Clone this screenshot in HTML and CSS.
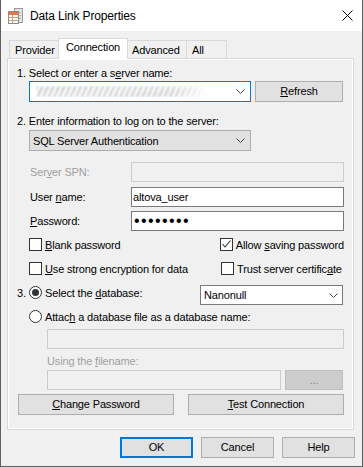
FILE: index.html
```html
<!DOCTYPE html>
<html>
<head>
<meta charset="utf-8">
<link rel="stylesheet" href="styles.css">
</head>
<body>
<div class="window">
  <div class="titlebar">
    <svg class="app-icon" width="16" height="16" viewBox="0 0 16 16">
      <rect x="6.5" y="0.5" width="8" height="14" fill="#e4e4e4" stroke="#9a9a9a"/>
      <line x1="8" y1="4.5" x2="13" y2="4.5" stroke="#b0b0b0"/>
      <line x1="8" y1="7.5" x2="13" y2="7.5" stroke="#b0b0b0"/>
      <line x1="8" y1="10.5" x2="13" y2="10.5" stroke="#b0b0b0"/>
      <rect x="0.5" y="3.5" width="10" height="12" fill="#fafafa" stroke="#8c8c8c"/>
      <rect x="1" y="4" width="9" height="3" fill="#e9773d"/>
      <line x1="1" y1="9.5" x2="10" y2="9.5" stroke="#c9a07c"/>
      <line x1="1" y1="12.5" x2="10" y2="12.5" stroke="#c9a07c"/>
      <line x1="4.5" y1="7" x2="4.5" y2="15" stroke="#c9a07c"/>
    </svg>
    <span class="title">Data Link Properties</span>
    <svg class="close" width="11" height="11" viewBox="0 0 11 11">
      <line x1="0.5" y1="0.5" x2="10.5" y2="10.5" stroke="#000"/>
      <line x1="10.5" y1="0.5" x2="0.5" y2="10.5" stroke="#000"/>
    </svg>
  </div>

  <div class="main">
    <div class="tabs">
      <div class="tab tab-provider">Provider</div>
      <div class="tab tab-connection active">Connection</div>
      <div class="tab tab-advanced">Advanced</div>
      <div class="tab tab-all">All</div>
    </div>
    <div class="panel">
      <div class="text-row">1. Select or enter a s<u>e</u>rver name:</div>
      <div class="server-row">
        <div class="combo focus">
          <div class="blurred"></div>
          <svg class="chevron" width="9" height="5" viewBox="0 0 9 5"><polyline points="0.5,0.5 4.5,4.5 8.5,0.5" fill="none" stroke="#444"/></svg>
        </div>
        <div class="btn refresh"><u>R</u>efresh</div>
      </div>
      <div class="text-row r2">2. Enter information to log on to the server:</div>
      <div class="combo list auth">
        <span class="combo-text">SQL Server Authentication</span>
        <svg class="chevron" width="9" height="5" viewBox="0 0 9 5"><polyline points="0.5,0.5 4.5,4.5 8.5,0.5" fill="none" stroke="#444"/></svg>
      </div>
      <div class="field-row spn">
        <span class="field-label disabled">Ser<u>v</u>er SPN:</span>
        <div class="input disabled-input"></div>
      </div>
      <div class="field-row user">
        <span class="field-label">User <u>n</u>ame:</span>
        <div class="input">altova_user</div>
      </div>
      <div class="field-row pass">
        <span class="field-label"><u>P</u>assword:</span>
        <div class="input password">••••••••</div>
      </div>
      <div class="check-row c1">
        <div class="check-item first"><span class="box"></span><span><u>B</u>lank password</span></div>
        <div class="check-item"><span class="box"><svg width="11" height="11" viewBox="0 0 11 11"><polyline points="1.5,5 4,8 9.5,1.5" fill="none" stroke="#333" stroke-width="1.1"/></svg></span><span>Allow <u>s</u>aving password</span></div>
      </div>
      <div class="check-row c2">
        <div class="check-item first"><span class="box"></span><span><u>U</u>se strong encryption for data</span></div>
        <div class="check-item"><span class="box"></span><span>Trust server certific<u>a</u>te</span></div>
      </div>
      <div class="db-row">
        <div class="db-left">
          <span class="num">3.</span>
          <span class="radio checked"><span class="dot"></span></span>
          <span>Select the <u>d</u>atabase:</span>
        </div>
        <div class="combo db">
          <span class="combo-text">Nanonull</span>
          <svg class="chevron" width="9" height="5" viewBox="0 0 9 5"><polyline points="0.5,0.5 4.5,4.5 8.5,0.5" fill="none" stroke="#444"/></svg>
        </div>
      </div>
      <div class="radio-row">
        <span class="radio"></span>
        <span>Attac<u>h</u> a database file as a database name:</span>
      </div>
      <div class="input disabled-input attach"></div>
      <div class="text-row using disabled">Using the <u>f</u>ilename:</div>
      <div class="file-row">
        <div class="input disabled-input file"></div>
        <div class="btn browse">...</div>
      </div>
      <div class="action-row">
        <div class="btn action"><u>C</u>hange Password</div>
        <div class="btn action test"><u>T</u>est Connection</div>
      </div>
    </div>
    <div class="footer">
      <div class="btn foot default">OK</div>
      <div class="btn foot">Cancel</div>
      <div class="btn foot">Help</div>
    </div>
  </div>
</div>
</body>
</html>
```

FILE: styles.css
```css
body {
  margin: 0;
  background: #ffffff;
  font-family: "Liberation Sans", Arial, sans-serif;
  font-size: 11px;
  letter-spacing: -0.15px;
  color: #000;
}

u {
  text-decoration: underline;
  text-underline-offset: 1px;
}

.window {
  width: 363px;
  height: 467px;
  box-sizing: border-box;
  border: 1px solid #5f5f5f;
  border-top: none;
  background: #f0f0f0;
  display: flex;
  flex-direction: column;
}

.titlebar {
  height: 31px;
  flex-shrink: 0;
  background: #ffffff;
  display: flex;
  align-items: center;
}

.app-icon {
  margin-left: 7px;
}

.title {
  margin-left: 6px;
  font-size: 12px;
}

.close {
  margin-left: auto;
  margin-right: 9px;
}

.main {
  flex: 1;
  padding: 7px 8px 0 6px;
  display: flex;
  flex-direction: column;
}

.tabs {
  display: flex;
  align-items: flex-end;
  height: 20px;
  padding-left: 2px;
}

.tab {
  height: 18px;
  box-sizing: border-box;
  border-top: 1px solid #d9d9d9;
  background: #f0f0f0;
  line-height: 15px;
  padding-top: 2px;
  white-space: nowrap;
}

.tab-provider {
  width: 49px;
  border-left: 1px solid #d9d9d9;
  padding-left: 5px;
}

.tab-connection {
  width: 70px;
  border-left: 1px solid #d9d9d9;
  border-right: 1px solid #d9d9d9;
  text-align: center;
}

.tab-advanced {
  width: 59px;
  border-right: 1px solid #d9d9d9;
  padding-left: 4px;
}

.tab-all {
  width: 40px;
  border-right: 1px solid #d9d9d9;
  padding-left: 5px;
}

.tab.active {
  height: 21px;
  margin-bottom: -1px;
  background: #ffffff;
  padding-top: 1px;
  position: relative;
  z-index: 1;
}

.panel {
  height: 372px;
  box-sizing: border-box;
  border: 1px solid #d9d9d9;
  box-shadow: inset 0 0 0 1px #ffffff;
  padding: 7px 9px 0 9px;
  display: flex;
  flex-direction: column;
}

.text-row {
  line-height: 15px;
  white-space: nowrap;
}

.r2 {
  margin-top: 12px;
}

.disabled {
  color: #a0a0a0;
}

.server-row {
  display: flex;
  margin-left: 12px;
}

.combo {
  width: 222px;
  height: 21px;
  box-sizing: border-box;
  border: 1px solid #adadad;
  display: flex;
  align-items: center;
}

.combo.focus {
  border-color: #0078d7;
  background: #ffffff;
}

.combo.list {
  background: #e1e1e1;
}

.combo-text {
  padding-left: 3px;
  white-space: nowrap;
}

.chevron {
  margin-left: auto;
  margin-right: 5px;
}

.blurred {
  width: 172px;
  height: 11px;
  margin-left: 6px;
  background: repeating-linear-gradient(115deg, #bdbdbd 0 2px, rgba(255,255,255,0) 2px 5px);
  filter: blur(1.3px);
  opacity: 0.85;
  -webkit-mask-image: linear-gradient(90deg, #000 80%, transparent);
  mask-image: linear-gradient(90deg, #000 80%, transparent);
}

.btn {
  box-sizing: border-box;
  height: 21px;
  border: 1px solid #adadad;
  background: #e1e1e1;
  text-align: center;
  line-height: 19px;
  white-space: nowrap;
}

.refresh {
  width: 88px;
  margin-left: 4px;
}

.auth {
  margin-top: 1px;
  margin-left: 12px;
}

.field-row {
  display: flex;
  align-items: center;
  height: 20px;
}

.field-label {
  margin-left: 13px;
  width: 101px;
  white-space: nowrap;
}

.input {
  width: 213px;
  height: 20px;
  box-sizing: border-box;
  border: 1px solid #7a7a7a;
  background: #ffffff;
  padding-left: 1px;
  line-height: 18px;
  white-space: nowrap;
}

.disabled-input {
  border-color: #cccccc;
  background: #f0f0f0;
}

.password {
  font-size: 16px;
  letter-spacing: 1.4px;
  line-height: 17px;
  padding-left: 2px;
}

.spn {
  margin-top: 11px;
}

.user {
  margin-top: 5px;
}

.pass {
  margin-top: 4px;
}

.check-row {
  display: flex;
  height: 13px;
  margin-left: 12px;
}

.c1 {
  margin-top: 7px;
}

.c2 {
  margin-top: 11px;
}

.check-item {
  display: flex;
  align-items: center;
  white-space: nowrap;
}

.check-item.first {
  width: 192px;
}

.box {
  width: 13px;
  height: 13px;
  box-sizing: border-box;
  border: 1px solid #333333;
  background: #ffffff;
  margin-right: 3px;
  display: flex;
  align-items: center;
  justify-content: center;
  flex-shrink: 0;
}

.db-row {
  display: flex;
  align-items: flex-start;
  height: 20px;
  margin-top: 10px;
}

.db-left {
  display: flex;
  align-items: center;
  height: 15px;
  white-space: nowrap;
}

.num {
  width: 12px;
}

.radio {
  width: 13px;
  height: 13px;
  box-sizing: border-box;
  border: 1px solid #333333;
  border-radius: 50%;
  background: #ffffff;
  margin-right: 3px;
  display: flex;
  align-items: center;
  justify-content: center;
  flex-shrink: 0;
}

.dot {
  width: 7px;
  height: 7px;
  border-radius: 50%;
  background: #333333;
}

.combo.db {
  width: 143px;
  height: 20px;
  margin-left: auto;
  margin-right: 1px;
  border-color: #7a7a7a;
  background: #ffffff;
}

.combo.db .chevron {
  margin-right: 4px;
}

.radio-row {
  display: flex;
  align-items: center;
  height: 13px;
  margin-top: 5px;
  margin-left: 12px;
  white-space: nowrap;
}

.attach {
  width: 297px;
  margin-top: 6px;
  margin-left: 30px;
}

.using {
  margin-top: 5px;
  margin-left: 30px;
}

.file-row {
  display: flex;
  margin-top: 1px;
  margin-left: 30px;
}

.file {
  width: 234px;
}

.browse {
  width: 58px;
  height: 20px;
  margin-left: 4px;
  background: #cccccc;
  border-color: #bfbfbf;
  color: #838383;
  line-height: 18px;
}

.action-row {
  display: flex;
  margin-top: 4px;
  margin-left: 1px;
}

.action {
  width: 156px;
}

.test {
  margin-left: 14px;
}

.footer {
  display: flex;
  justify-content: flex-end;
  gap: 8px;
  margin-top: 7px;
  margin-right: -1px;
}

.foot {
  width: 73px;
}

.foot.default {
  border: 2px solid #0078d7;
  line-height: 17px;
}
```
